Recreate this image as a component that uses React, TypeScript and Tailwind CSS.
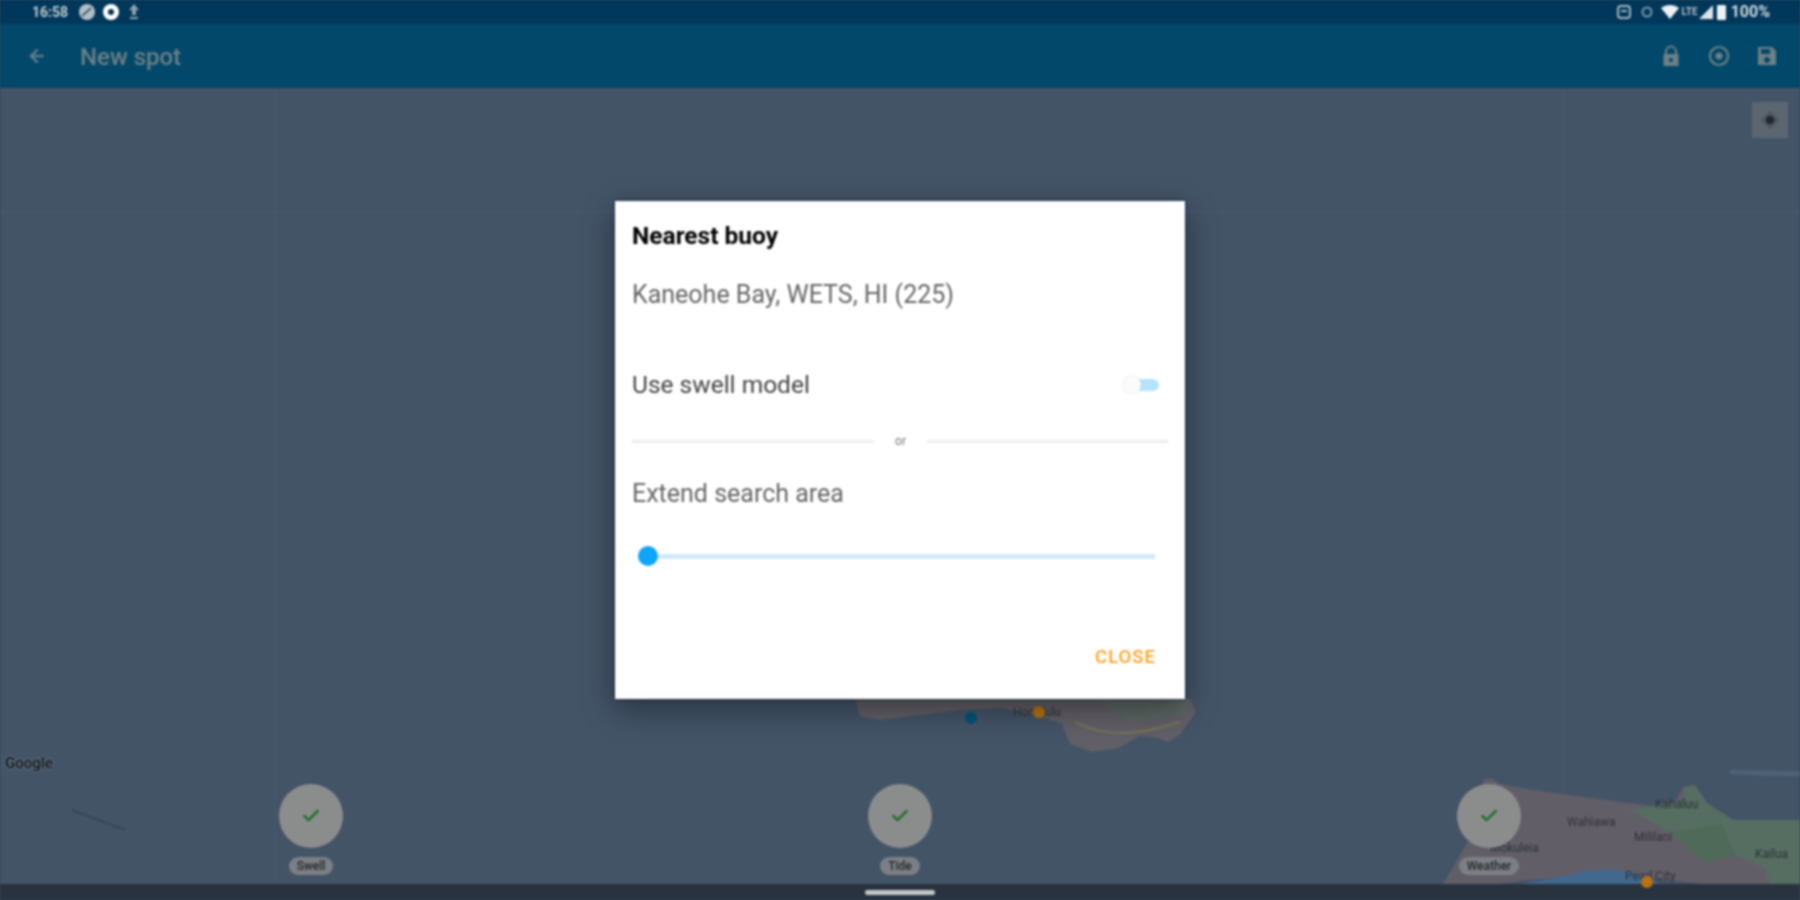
import React from "react";
import { ArrowLeft, Check } from "lucide-react";

function MapLand() {
  return (
    <svg className="absolute inset-0 w-full h-full" viewBox="0 88 1800 796" preserveAspectRatio="none">
      <line x1="275" y1="88" x2="275" y2="884" stroke="#495a6c" />
      <line x1="1563" y1="88" x2="1563" y2="800" stroke="#495a6c" />
      <line x1="0" y1="212" x2="1800" y2="212" stroke="#495a6c" />
      <path d="M855 699 L1190 699 L1196 712 L1180 735 L1168 742 L1158 738 L1140 736 L1118 748 L1092 752 L1070 744 L1062 724 L1040 716 L1000 708 L960 710 L880 720 L860 716 Z" fill="#615f67" />
      <path d="M1075 722 C1100 735 1130 738 1180 722" fill="none" stroke="#71705a" strokeWidth="3" />
      <path d="M1100 699 L1190 699 L1185 715 L1130 722 Z" fill="#5a6b62" opacity="0.7" />
      <path d="M1443 884 L1470 838 L1458 815 L1482 790 L1484 779 L1493 779 L1500 784 L1533 790 L1590 798 L1627 803 L1653 806 L1675 802 L1683 787 L1695 785 L1707 803 L1733 820 L1800 820 L1800 884 L1700 884 L1645 877 L1610 872 L1570 876 L1520 881 L1500 884 Z" fill="#625e68" />
      <path d="M1630 810 L1683 802 L1684 787 L1695 785 L1707 803 L1733 820 L1800 820 L1800 884 L1770 884 L1765 868 L1735 855 L1705 863 L1670 832 Z" fill="#566d62" />
      <path d="M1670 832 L1705 863 L1735 855 L1722 825 Z" fill="#4f6a58" />
      <path d="M1570 875 C1590 868 1620 868 1640 875 L1660 884 L1520 884 Z" fill="#42688e" />
      <line x1="72" y1="810" x2="125" y2="830" stroke="#38444f" strokeWidth="1.5" />
      <line x1="1730" y1="772" x2="1800" y2="774" stroke="#4f6175" strokeWidth="5" />
    </svg>
  );
}

function MapLabel({ className, children }: { className: string; children: React.ReactNode }) {
  return <span className={`absolute text-[12px] leading-none text-[#2e3338] ${className}`}>{children}</span>;
}

function CheckItem({ label, pill }: { label: string; pill: string }) {
  return (
    <div className="w-20 flex flex-col items-center">
      <div className="w-16 h-16 rounded-full bg-[#8b8d8d] flex items-center justify-center">
        <Check className="w-5 h-5 text-[#236f2c]" strokeWidth={3} />
      </div>
      <div className={`mt-[9px] h-[18px] rounded-full bg-[#7c8084] flex items-center justify-center text-[12px] font-medium text-[#24272a] ${pill}`}>{label}</div>
    </div>
  );
}

export default function App() {
  return (
    <div className="w-[1800px] h-[900px] overflow-hidden bg-[#35465a]">
      <div className="relative w-[1800px] h-[900px] overflow-hidden flex flex-col bg-[#435467] blur-[1px]" style={{ fontFamily: "Roboto, sans-serif" }}>
        {/* status bar */}
        <div className="h-6 shrink-0 bg-[#00375a] flex items-center pl-8 pr-[30px] text-[14px] font-bold text-[#c4ccd2]">
          <span className="w-[44px]">16:58</span>
          <svg className="ml-[3px] w-4 h-4" viewBox="0 0 16 16"><circle cx="8" cy="8" r="8" fill="#b4bec6" /><path d="M3 12 L12 4" stroke="#44606f" strokeWidth="2" /></svg>
          <div className="w-4 h-4 rounded-full bg-white ml-2 flex items-center justify-center">
            <div className="w-[6px] h-[6px] rounded-full bg-[#0a3050]" />
          </div>
          <svg className="ml-2 w-[14px] h-[18px]" viewBox="0 0 14 18"><path d="M7 1 L12 7 L9 7 L9 12 L5 12 L5 7 L2 7 Z M3 14 H11 V16 H3 Z" fill="#8fa3ad" /></svg>
          <div className="flex-1" />
          <svg className="w-[14px] h-4" viewBox="0 0 14 16"><rect x="1" y="2" width="12" height="12" rx="3" fill="none" stroke="#a8b4bc" strokeWidth="2" /><rect x="4" y="6" width="6" height="2" fill="#a8b4bc" /></svg>
          <svg className="ml-[10px] w-3 h-4" viewBox="0 0 12 16"><circle cx="6" cy="8" r="4.5" fill="none" stroke="#7f9aac" strokeWidth="2" /></svg>
          <svg className="ml-2 w-[18px] h-[14px]" viewBox="0 0 18 14"><path d="M0 3 C5 -1 13 -1 18 3 L9 14 Z" fill="#eef2f4" /></svg>
          <span className="ml-[3px] text-[10px] leading-none text-[#b4bec6]">LTE</span>
          <svg className="ml-[1px] w-[14px] h-[14px]" viewBox="0 0 14 14"><path d="M14 0 V14 H0 Z" fill="#dfe4e8" /></svg>
          <div className="ml-[4px] w-[9px] h-[15px] bg-[#eef2f4] rounded-[1px]" />
          <span className="ml-[5px] text-[16px] leading-none text-[#d4dade]">100%</span>
        </div>

        {/* app bar */}
        <div className="h-16 shrink-0 bg-[#02486a] flex items-center pl-[27px] pr-[22px] text-[#5f7c88]">
          <ArrowLeft className="w-[20px] h-[20px]" strokeWidth={3} />
          <span className="ml-[33px] mt-[2px] text-[24px] font-medium text-[#6e8084]">New spot</span>
          <div className="flex-1" />
          <svg className="w-[22px] h-[22px]" viewBox="0 0 22 22">
            <path d="M6 9 V6.5 A5 5 0 0 1 16 6.5 V9" fill="none" stroke="#6d8084" strokeWidth="2" />
            <path d="M3.5 9 H18.500 V21 H3.500 Z M11 13 A2 2 0 1 0 11.010 13 Z" fill="#6d8084" fillRule="evenodd" />
          </svg>
          <svg className="ml-[26px] w-[22px] h-[22px]" viewBox="0 0 22 22"><circle cx="11" cy="11" r="9" fill="none" stroke="#6d8084" strokeWidth="2.2" /><circle cx="11" cy="11" r="3.5" fill="#6d8084" /></svg>
          <svg className="ml-[26px] w-[22px] h-[22px]" viewBox="0 0 22 22">
            <path d="M2 2 H16 L20 6 V20 H2 Z M5 4 V9 H14 V4 Z M11 12 A3 3 0 1 0 11.010 12 Z" fill="#6d8084" fillRule="evenodd" />
          </svg>
        </div>

        {/* map */}
        <div className="relative flex-1">
          <MapLand />
          <MapLabel className="left-[1013px] top-[618px]">Honolulu</MapLabel>
          <MapLabel className="left-[1567px] top-[728px]">Wahiawa</MapLabel>
          <MapLabel className="left-[1655px] top-[710px]">Kahaluu</MapLabel>
          <MapLabel className="left-[1634px] top-[743px]">Mililani</MapLabel>
          <MapLabel className="left-[1490px] top-[754px]">Mokuleia</MapLabel>
          <MapLabel className="left-[1625px] top-[782px]">Pearl City</MapLabel>
          <MapLabel className="left-[1755px] top-[760px]">Kailua</MapLabel>
          <span className="absolute left-[1033px] top-[618px] w-3 h-3 rounded-full bg-[#b8720f]" />
          <span className="absolute left-[965px] top-[624px] w-3 h-3 rounded-full bg-[#04527a]" />
          <span className="absolute left-[1641px] top-[788px] w-3 h-3 rounded-full bg-[#b8720f]" />
          <span className="absolute left-[5px] top-[668px] text-[15px] font-bold leading-none text-[#141c25] [text-shadow:0_0_3px_#8b9096]">Google</span>
          <div className="absolute right-3 top-[14px] w-9 h-9 bg-[#5c6671] flex items-center justify-center">
            <svg className="w-5 h-5" viewBox="0 0 20 20"><path d="M10 1 L19 10 L10 19 L1 10 Z" fill="#4b535c" /><circle cx="10" cy="10" r="4" fill="#23282e" /></svg>
          </div>
          <div className="absolute left-0 right-0 bottom-[9px] flex justify-center gap-[509px]">
            <CheckItem label="Swell" pill="w-[44px]" />
            <CheckItem label="Tide" pill="w-[40px]" />
            <CheckItem label="Weather" pill="w-[60px]" />
          </div>
        </div>

        {/* nav bar */}
        <div className="h-4 shrink-0 bg-[#28333f] flex items-center justify-center">
          <div className="w-[70px] h-[5px] rounded-full bg-[#c4c6c8]" />
        </div>

        {/* dialog */}
        <div className="absolute inset-0 flex items-center justify-center">
          <div className="w-[570px] h-[498px] bg-white flex flex-col px-[17px] shadow-[0_0_3px_#071a38,0_10px_30px_rgba(0,0,0,0.4)]">
            <h2 className="mt-[20px] h-[30px] leading-[30px] text-[24.500px] font-bold text-[#000000]">Nearest buoy</h2>
            <p className="mt-[29px] h-[30px] leading-[30px] text-[25px] text-[#666666]">Kaneohe Bay, WETS, HI (225)</p>
            <div className="mt-[60px] h-[30px] flex items-center justify-between pr-[9px]">
              <span className="text-[24.500px] text-[#444444]">Use swell model</span>
              <div className="relative w-[36px] h-[18px]">
                <div className="absolute right-0 top-[3px] w-[24px] h-[12px] rounded-full bg-[#b5e3fd]" />
                <div className="absolute left-0 top-0 w-[18px] h-[18px] rounded-full bg-[#fbfbfb] shadow-[0_0_2px_rgba(0,0,0,0.15)]" />
              </div>
            </div>
            <div className="mt-[38px] h-[6px] flex items-center">
              <div className="w-[242px] h-[3px] bg-[#eeeeee]" />
              <span className="flex-1 text-center text-[12px] leading-none text-[#777777]">or</span>
              <div className="w-[241px] h-[3px] bg-[#eeeeee]" />
            </div>
            <p className="mt-[35px] h-[30px] leading-[30px] text-[25px] text-[#666666]">Extend search area</p>
            <div className="mt-[37px] h-5 flex items-center pl-[6px] pr-[13px]">
              <div className="w-5 h-5 rounded-full bg-[#0ea5fa] shrink-0" />
              <div className="flex-1 h-[5px] bg-[#cfeafd]" />
            </div>
            <div className="mt-[82px] flex justify-end pr-[12px]">
              <span className="text-[18.500px] font-medium leading-none tracking-[1px] text-[#ff9f1c]">CLOSE</span>
            </div>
          </div>
        </div>
      </div>
    </div>
  );
}
